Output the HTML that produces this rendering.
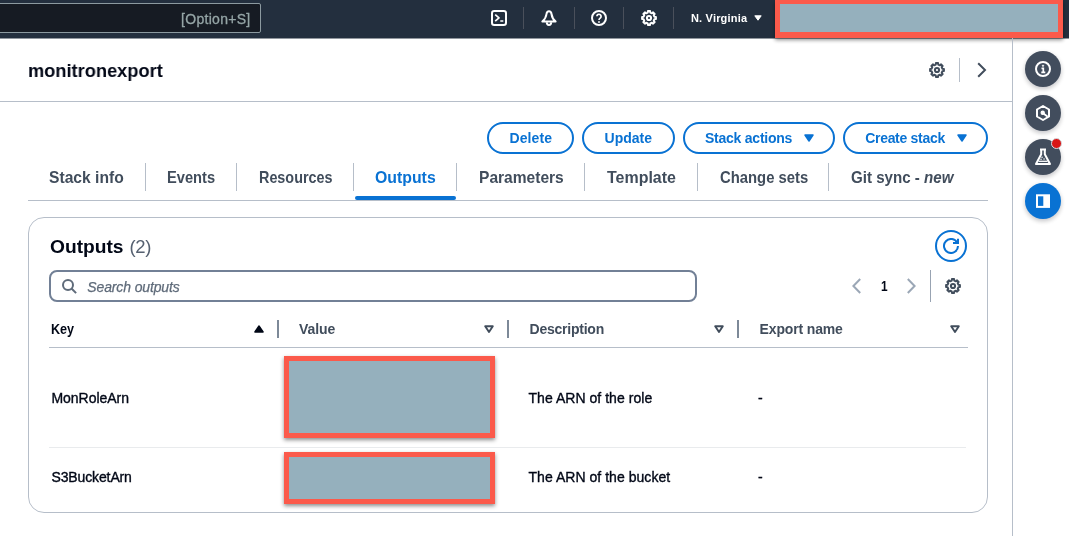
<!DOCTYPE html>
<html lang="en">
<head>
<meta charset="utf-8">
<title>CloudFormation - Stack monitronexport</title>
<style>
*{box-sizing:border-box;margin:0;padding:0}
html,body{width:1069px;height:536px;overflow:hidden;background:#fff}
body{font-family:"Liberation Sans",sans-serif;color:#000716;position:relative;font-size:14px}
#wrap{position:absolute;left:0;top:0;width:1069px;height:536px;will-change:transform;opacity:.999}
.abs{position:absolute}
.t{position:absolute;white-space:nowrap;line-height:20px}
#nav{position:absolute;left:0;top:0;width:1069px;height:38px;background:#232f3e}
#search{position:absolute;left:-2px;top:3px;width:263px;height:30px;background:#161b23;border:1px solid #8c9aa0;border-radius:2px}
#opt{left:181px;top:9px;font-size:14px;color:#95a5a6;letter-spacing:.3px;-webkit-text-stroke:.3px #95a5a6}
.nd{position:absolute;top:7px;width:1px;height:22px;background:#4a505b}
#region{left:691px;top:8px;font-size:11px;font-weight:bold;color:#fff;letter-spacing:.18px}
.red{position:absolute;background:#95b0bd;border:4px solid #fb5a4b;box-shadow:0 2px 4px rgba(0,0,0,.45)}
#title{left:28px;top:59px;font-size:19.2px;font-weight:bold;line-height:24px;color:#000716}
#hline{position:absolute;left:0;top:101px;width:1012px;height:1px;background:#b6bec9}
#vline{position:absolute;left:1012px;top:38px;width:1px;height:498px;background:#b6bec9}
.circ{position:absolute;left:1025px;width:36px;height:36px;border-radius:50%;background:#424d5d;box-shadow:0 2px 5px rgba(0,7,22,.25)}
.btn{position:absolute;top:122px;height:32px;border:2px solid #0972d3;border-radius:16px;color:#0972d3;font-weight:bold;font-size:14px;line-height:28px;white-space:nowrap;background:#fff}
.btn span{position:absolute;top:0}
.tab{font-size:16.5px;font-weight:bold;color:#414d5c;top:167px}
.sx{display:inline-block;transform-origin:0 50%}
.tdv{position:absolute;top:163px;width:1px;height:28px;background:#b6bec9}
#tabline{position:absolute;left:28px;top:200px;width:960px;height:1px;background:#b6bec9}
#tabul{position:absolute;left:355px;top:196px;width:101px;height:4px;border-radius:2px;background:#0972d3}
#box{position:absolute;left:28px;top:217px;width:960px;height:296px;border:1px solid #b6bec9;border-radius:16px;background:#fff}
#h2{left:50px;top:235px;font-size:19.2px;font-weight:bold;line-height:24px}
#h2c{left:129.500px;top:235px;font-size:18.5px;line-height:24px;color:#566171;letter-spacing:-.3px}
#refresh{position:absolute;left:935px;top:230px;width:32px;height:32px;border:2px solid #0972d3;border-radius:50%}
#input{position:absolute;left:49px;top:270px;width:648px;height:32px;border:2px solid #728096;border-radius:8px;background:#fff}
#ph{left:87.300px;top:277px;font-style:italic;color:#5f6b7a;font-size:14px;letter-spacing:-.13px;-webkit-text-stroke:.25px #5f6b7a}
.th{font-weight:bold;color:#414d5c;top:319px;font-size:14px}
.hd{position:absolute;top:320px;width:2px;height:18px;background:#7d8998}
#thline{position:absolute;left:49px;top:347px;width:919px;height:1px;background:#b6bec9}
#rowline{position:absolute;left:49px;top:447px;width:917px;height:1px;background:#e9ebed}
.td{font-size:14px;color:#000716;-webkit-text-stroke:.35px #000716}
</style>
</head>
<body>
<div id="wrap">
<div class="abs" style="left:0;top:38px;width:1069px;height:1px;background:#91979e"></div>
<div id="nav">
  <div id="search"></div>
  <div class="t" id="opt">[Option+S]</div>
  <svg class="abs" style="left:491px;top:10px" width="16" height="16" viewBox="0 0 16 16" fill="none" stroke="#fff" stroke-width="2" stroke-linejoin="round"><rect x="1" y="1" width="14" height="14" rx="2.200"/><path d="M4.200 4.600L8 7.900l-3.800 3.300M9.300 11h3" stroke-width="1.700"/></svg>
  <div class="nd" style="left:523px"></div>
  <svg class="abs" style="left:541px;top:10px" width="16" height="16" viewBox="0 0 16 16" fill="none" stroke="#fff" stroke-width="2" stroke-linejoin="round"><path d="M8 1.200C6.600 1.200 5.700 2.400 5.500 4 5.100 7 3.600 9.600 1.400 11.600H14.600C12.400 9.600 10.900 7 10.500 4 10.300 2.400 9.400 1.200 8 1.200z"/><path d="M5.800 12.200a2.200 2.700 0 004.400 0"/></svg>
  <div class="nd" style="left:574px"></div>
  <svg class="abs" style="left:591px;top:10px" width="16" height="16" viewBox="0 0 16 16" fill="none" stroke="#fff" stroke-width="2"><circle cx="8" cy="8" r="7"/><path d="M5.900 6.300a2.100 2.100 0 113.400 1.700c-.8.600-1.300.9-1.300 1.900" stroke-width="1.700"/><circle cx="8" cy="12" r=".6" fill="#fff" stroke-width=".8"/></svg>
  <div class="nd" style="left:623px"></div>
  <svg class="abs" id="gear1" style="left:641px;top:10px" width="16" height="16" viewBox="0 0 16 16" fill="none" stroke="#fff" stroke-width="2" stroke-linejoin="round"><path d="M6.72 2.65 L6.90 1.09 L9.10 1.09 L9.28 2.65 L10.87 3.31 L12.11 2.34 L13.66 3.89 L12.69 5.13 L13.35 6.72 L14.91 6.90 L14.91 9.10 L13.35 9.28 L12.69 10.87 L13.66 12.11 L12.11 13.66 L10.87 12.69 L9.28 13.35 L9.10 14.91 L6.90 14.91 L6.72 13.35 L5.13 12.69 L3.89 13.66 L2.34 12.11 L3.31 10.87 L2.65 9.28 L1.09 9.10 L1.09 6.90 L2.65 6.72 L3.31 5.13 L2.34 3.89 L3.89 2.34 L5.13 3.31Z"/><circle cx="8" cy="8" r="2.100"/></svg>
  <div class="nd" style="left:673px"></div>
  <div class="t" id="region">N. Virginia</div>
  <svg class="abs" style="left:754px;top:15px" width="8" height="6" viewBox="0 0 8 6"><path d="M.8.800h6.400L4 5.200z" fill="#fff" stroke="#fff" stroke-width="1" stroke-linejoin="round"/></svg>
  <div class="red" style="left:775px;top:0;width:288px;height:38px;border-width:4px 5px 6px 5px"></div>
</div>

<div class="t" id="title"><span class="sx" style="transform:scaleX(.95)">monitronexport</span></div>
<svg class="abs" style="left:929px;top:62px" width="16" height="16" viewBox="0 0 16 16" fill="none" stroke="#414d5c" stroke-width="2" stroke-linejoin="round"><path d="M6.72 2.65 L6.90 1.09 L9.10 1.09 L9.28 2.65 L10.87 3.31 L12.11 2.34 L13.66 3.89 L12.69 5.13 L13.35 6.72 L14.91 6.90 L14.91 9.10 L13.35 9.28 L12.69 10.87 L13.66 12.11 L12.11 13.66 L10.87 12.69 L9.28 13.35 L9.10 14.91 L6.90 14.91 L6.72 13.35 L5.13 12.69 L3.89 13.66 L2.34 12.11 L3.31 10.87 L2.65 9.28 L1.09 9.10 L1.09 6.90 L2.65 6.72 L3.31 5.13 L2.34 3.89 L3.89 2.34 L5.13 3.31Z"/><circle cx="8" cy="8" r="2.100"/></svg>
<div class="abs" style="left:959px;top:58px;width:1px;height:24px;background:#b6bec9"></div>
<svg class="abs" style="left:976px;top:61px" width="12" height="18" viewBox="0 0 12 18" fill="none" stroke="#414d5c" stroke-width="2"><path d="M2.200 2.200L9 9l-6.800 6.800"/></svg>
<div id="hline"></div>
<div id="vline"></div>

<div class="circ" style="top:51px"><svg class="abs" style="left:10px;top:10px" width="16" height="16" viewBox="0 0 16 16" fill="none" stroke="#fff" stroke-width="2"><circle cx="8" cy="8" r="7"/><path d="M6.500 7.300H8.300V11.300M6.300 11.400h4" stroke-width="1.700"/><circle cx="8" cy="4.700" r=".7" fill="#fff" stroke-width=".8"/></svg></div>
<div class="circ" style="top:95px"><svg class="abs" style="left:10px;top:10px" width="16" height="16" viewBox="0 0 16 16" fill="none" stroke="#fff" stroke-width="2" stroke-linejoin="round"><path d="M8 1l6 3.500v7L8 15 2 11.500v-7z"/><circle cx="7.700" cy="7.700" r="1.600" fill="#fff" stroke-width="1.200"/><path d="M8.500 8.500l4.200 3.200" stroke-width="1.800"/></svg></div>
<div class="circ" style="top:139px"><svg class="abs" style="left:9px;top:9px" width="18" height="18" viewBox="0 0 18 18" fill="none" stroke="#fff" stroke-width="2" stroke-linejoin="round"><path d="M6 1.500h6M7.200 2v4.300L2 16h14L10.800 6.300V2"/><path d="M4.500 13.300h9" stroke-width="1.300"/><path d="M8 9.300h.1M10 11h.1M7 11.300h.1" stroke-width="1.400" stroke-linecap="round"/></svg></div>
<div class="abs" style="left:1051px;top:138px;width:11px;height:11px;border-radius:50%;background:#d91515;border:1px solid #d5dbe0"></div>
<div class="circ" style="top:183px;background:#0972d3"><svg class="abs" style="left:10px;top:10px" width="16" height="16" viewBox="0 0 16 16" fill="none" stroke="#fff" stroke-width="2"><rect x="2" y="2.300" width="12" height="11.600"/><rect x="8.300" y="3" width="5" height="10.500" fill="#fff" stroke="none"/></svg></div>

<div class="btn" style="left:487px;width:87px"><span style="left:20.600px;letter-spacing:.06px">Delete</span></div>
<div class="btn" style="left:582px;width:93px"><span style="left:20.600px">Update</span></div>
<div class="btn" style="left:683px;width:152px"><span style="left:20px;letter-spacing:-.24px">Stack actions</span><svg class="abs" style="left:119px;top:10px" width="10" height="8" viewBox="0 0 10 8"><path d="M1 1h8L5 7z" fill="#0972d3" stroke="#0972d3" stroke-width="1.500" stroke-linejoin="round"/></svg></div>
<div class="btn" style="left:843px;width:145px"><span style="left:20.200px;letter-spacing:-.3px">Create stack</span><svg class="abs" style="left:112px;top:10px" width="10" height="8" viewBox="0 0 10 8"><path d="M1 1h8L5 7z" fill="#0972d3" stroke="#0972d3" stroke-width="1.500" stroke-linejoin="round"/></svg></div>

<div class="t tab" id="tab1" style="left:49.3px"><span class="sx" style="transform:scaleX(0.947)">Stack info</span></div>
<div class="tdv" style="left:145px"></div>
<div class="t tab" id="tab2" style="left:167.4px"><span class="sx" style="transform:scaleX(0.889)">Events</span></div>
<div class="tdv" style="left:236px"></div>
<div class="t tab" id="tab3" style="left:258.8px"><span class="sx" style="transform:scaleX(0.871)">Resources</span></div>
<div class="tdv" style="left:353px"></div>
<div class="t tab" id="tab4" style="left:375.4px;color:#0972d3"><span class="sx" style="transform:scaleX(0.960)">Outputs</span></div>
<div class="tdv" style="left:456px"></div>
<div class="t tab" id="tab5" style="left:478.7px"><span class="sx" style="transform:scaleX(0.943)">Parameters</span></div>
<div class="tdv" style="left:584px"></div>
<div class="t tab" id="tab6" style="left:607.1px"><span class="sx" style="transform:scaleX(0.968)">Template</span></div>
<div class="tdv" style="left:697px"></div>
<div class="t tab" id="tab7" style="left:719.6px"><span class="sx" style="transform:scaleX(0.899)">Change sets</span></div>
<div class="tdv" style="left:828px"></div>
<div class="t tab" id="tab8" style="left:851.2px"><span class="sx" style="transform:scaleX(0.916)">Git sync - <i>new</i></span></div>
<div id="tabline"></div>
<div id="tabul"></div>

<div id="box"></div>
<div class="t" id="h2">Outputs</div><div class="t" id="h2c">(2)</div>
<div id="refresh"><svg class="abs" style="left:6px;top:5.500px" width="16" height="16" viewBox="0 0 16 16" fill="none" stroke="#0972d3" stroke-width="2"><path d="M15 8a7 7 0 11-.67-3"/><path d="M10 5h5V.8" stroke-linejoin="miter"/></svg></div>
<div id="input"></div>
<svg class="abs" style="left:61px;top:278px" width="16" height="16" viewBox="0 0 16 16" fill="none" stroke="#5f6b7a" stroke-width="2"><circle cx="7" cy="7" r="5"/><path d="M10.500 10.500l4.600 4.600"/></svg>
<div class="t" id="ph">Search outputs</div>
<svg class="abs" style="left:850px;top:277px" width="12" height="18" viewBox="0 0 12 18" fill="none" stroke="#9ba7b6" stroke-width="2"><path d="M10.200 2L3.400 9l6.800 7"/></svg>
<div class="t" id="pg1" style="left:880.500px;top:276px;font-weight:bold;font-size:14px"><span class="sx" style="transform:scaleX(.85)">1</span></div>
<svg class="abs" style="left:906px;top:277px" width="12" height="18" viewBox="0 0 12 18" fill="none" stroke="#9ba7b6" stroke-width="2"><path d="M1.800 2l6.800 7-6.800 7"/></svg>
<div class="abs" style="left:930px;top:270px;width:1px;height:32px;background:#98a3b2"></div>
<svg class="abs" style="left:945px;top:278px" width="16" height="16" viewBox="0 0 16 16" fill="none" stroke="#414d5c" stroke-width="2" stroke-linejoin="round"><path d="M6.72 2.65 L6.90 1.09 L9.10 1.09 L9.28 2.65 L10.87 3.31 L12.11 2.34 L13.66 3.89 L12.69 5.13 L13.35 6.72 L14.91 6.90 L14.91 9.10 L13.35 9.28 L12.69 10.87 L13.66 12.11 L12.11 13.66 L10.87 12.69 L9.28 13.35 L9.10 14.91 L6.90 14.91 L6.72 13.35 L5.13 12.69 L3.89 13.66 L2.34 12.11 L3.31 10.87 L2.65 9.28 L1.09 9.10 L1.09 6.90 L2.65 6.72 L3.31 5.13 L2.34 3.89 L3.89 2.34 L5.13 3.31Z"/><circle cx="8" cy="8" r="2.100"/></svg>

<div class="t th" id="th1" style="left:51.3px;color:#000716"><span class="sx" style="transform:scaleX(.9)">Key</span></div>
<svg class="abs" style="left:254px;top:325px" width="10" height="8" viewBox="0 0 10 8"><path d="M5 1L9.100 7H.9z" fill="#000716" stroke="#000716" stroke-width="1.400" stroke-linejoin="round"/></svg>
<div class="hd" style="left:277px"></div>
<div class="t th" id="th2" style="left:299px;letter-spacing:-0.10px">Value</div>
<svg class="abs" style="left:484px;top:325px" width="10" height="8" viewBox="0 0 10 8"><path d="M1.200 1.200h7.600L5 7z" fill="none" stroke="#414d5c" stroke-width="1.900" stroke-linejoin="round"/></svg>
<div class="hd" style="left:507px"></div>
<div class="t th" id="th3" style="left:529.6px;letter-spacing:-0.24px">Description</div>
<svg class="abs" style="left:714px;top:325px" width="10" height="8" viewBox="0 0 10 8"><path d="M1.200 1.200h7.600L5 7z" fill="none" stroke="#414d5c" stroke-width="1.900" stroke-linejoin="round"/></svg>
<div class="hd" style="left:737px"></div>
<div class="t th" id="th4" style="left:759.6px;letter-spacing:-0.15px">Export name</div>
<svg class="abs" style="left:950px;top:325px" width="10" height="8" viewBox="0 0 10 8"><path d="M1.200 1.200h7.600L5 7z" fill="none" stroke="#414d5c" stroke-width="1.900" stroke-linejoin="round"/></svg>
<div id="thline"></div>

<div class="t td" id="r1k" style="left:51.5px;letter-spacing:-0.04px;top:388px">MonRoleArn</div>
<div class="red" style="left:284px;top:356px;width:211px;height:82px;border-width:5px"></div>
<div class="t td" id="r1d" style="left:528.5px;letter-spacing:0.04px;top:388px">The ARN of the role</div>
<div class="t td" style="left:758px;top:388px">-</div>
<div id="rowline"></div>
<div class="t td" id="r2k" style="left:51.5px;letter-spacing:-0.13px;top:467px">S3BucketArn</div>
<div class="red" style="left:284px;top:452px;width:211px;height:52px;border-width:5px"></div>
<div class="t td" id="r2d" style="left:528.5px;letter-spacing:0.04px;top:467px">The ARN of the bucket</div>
<div class="t td" style="left:758px;top:467px">-</div>
</div>
</body>
</html>
